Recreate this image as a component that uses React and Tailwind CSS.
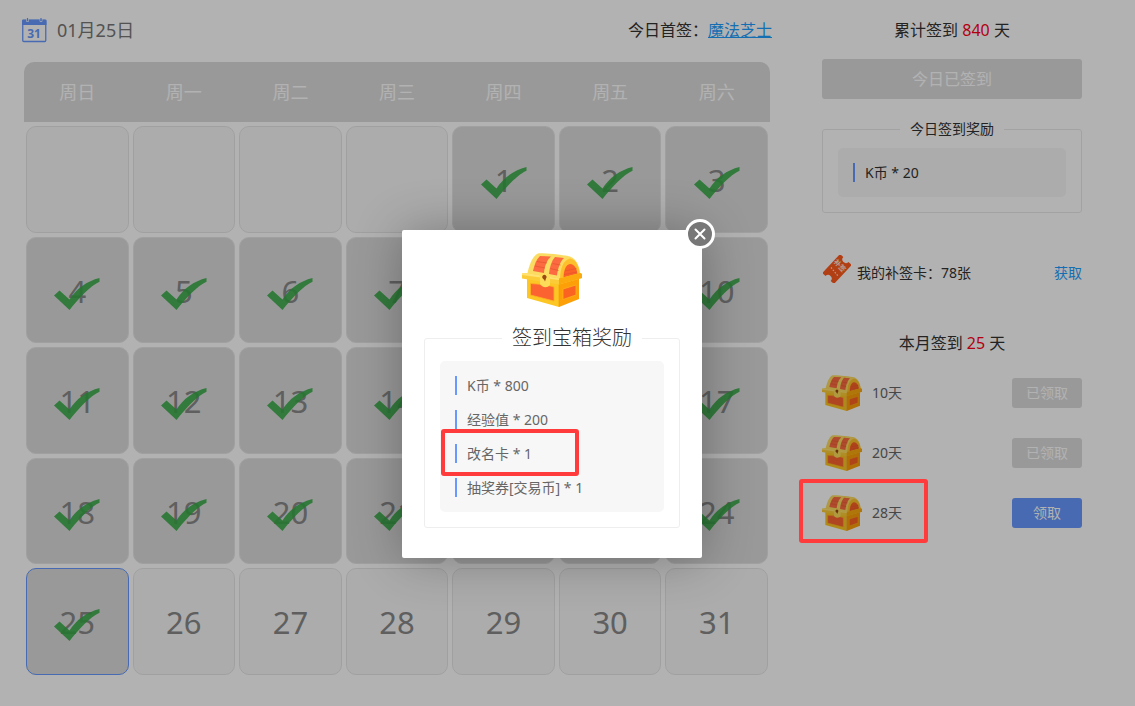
import React from "react";

const weekdays = ["周日", "周一", "周二", "周三", "周四", "周五", "周六"];
const today = 25;
const days = [null, null, null, null, ...Array.from({ length: 31 }, (_, i) => i + 1)];
const chests = [
  { days: 10, claimed: true },
  { days: 20, claimed: true },
  { days: 28, claimed: false, marked: true },
];
const rewards = [
  { text: "K币 * 800" },
  { text: "经验值 * 200" },
  { text: "改名卡 * 1", marked: true },
  { text: "抽奖券[交易币] * 1" },
];

function Chest({ className }) {
  return (
    <svg viewBox="0 0 60 54" className={className} aria-hidden="true">
      <path d="M5 24L37 29V54L5 45Z" fill="#fcc624" />
      <path d="M37 29L57 23V46L37 54Z" fill="#fd9f07" />
      <path d="M5 22C7 13 10 3 16 .5C19 -.3 43 2 48 3.500C55 6 58 15 58.500 23L37 29Z" fill="#fbdc62" />
      <path d="M38 27C38 16 41 7 48 5.500C55 6.500 57.500 15 58 23L38 29Z" fill="#fdc02c" />
      <path d="M18 3L29 3.500C25 7 22.500 13 22 20L11 18C12.500 11 14.500 6 18 3Z" fill="#fb6a40" />
      <path d="M33 4L42 5C38 9 36 15 35 22.500L27 21C27.500 14 29.500 8 33 4Z" fill="#fb6a40" />
      <path d="M41.500 25C41.500 17 44 11.500 48 11C53 11.500 55 16 55.500 22Z" fill="#fb6228" />
      <path d="M15 8.500L25 10M13 13L23 15M30.500 10.500L38.500 12M28.500 15.500L36.500 17.500M43 18L54.500 15.500M42 21.500L55 19" stroke="#e4532f" strokeWidth=".7" />
      <path d="M0 20.500L5 20L37 25.500L58 20L60 21V25L37 31.500L0 25.500Z" fill="#fccc38" />
      <path d="M37 25.500L58 20L60 21V25L37 31.500Z" fill="#fba90d" />
      <path d="M0 20.500L5 20L37 25.500V27L0 22Z" fill="#ffe272" />
      <path d="M8.500 30.500C17 31 26 32 32 34V48L8.500 42Z" fill="#fb6430" stroke="#fdb022" strokeWidth=".8" />
      <path d="M41 36L54 32V42L41 46.500Z" fill="#fb6420" stroke="#fdb020" strokeWidth=".8" />
      <path d="M18 20L28 21.500V32C25 35.500 20 34.500 18 31Z" fill="#fddc5a" />
      <path d="M22.300 27L20.800 25.500A2.200 2.200 0 1 1 24 25.500L23 28.500Z" fill="#9a4a14" />
      <path d="M37 31.500V54" stroke="#f59a06" strokeWidth=".6" />
    </svg>
  );
}

function CalendarIcon() {
  return (
    <svg viewBox="0 0 25 25" className="size-[25px]" aria-hidden="true">
      <rect x=".75" y="2.500" width="23" height="21" rx="1" fill="none" stroke="#6799ff" strokeWidth="1.300" />
      <path d="M0 2.500Q0 1.500 1 1.500H23.500Q24.500 1.500 24.500 2.500V7H0Z" fill="#6799ff" />
      <path d="M4.500 0V3.500H6.500V0M18 0V3.500H20V0" fill="none" stroke="#ffffff" strokeWidth=".7" />
      <path d="M5.500 0V3M19 0V3" stroke="#6799ff" strokeWidth="1.200" />
      <text x="12" y="20" textAnchor="middle" fontSize="12" fontWeight="700" fill="#6799ff">31</text>
    </svg>
  );
}

function Ticket() {
  return (
    <svg viewBox="0 0 28 28" className="size-7 -translate-y-1" aria-hidden="true">
      <g transform="rotate(-47 14 14)">
        <path d="M2 6H26Q27 6 27 7V10.500A3.500 3.500 0 0 0 27 17.500V21Q27 22 26 22H2Q1 22 1 21V17.500A3.500 3.500 0 0 0 1 10.500V7Q1 6 2 6Z" fill="#ff5a1e" />
      </g>
      <path d="M8 12.500L15 21" stroke="#ffe0d0" strokeWidth="1.200" strokeDasharray="1.500 1.500" />
      <text x="16.500" y="13" textAnchor="middle" fontSize="7" fontWeight="700" fill="#ffe8dd" transform="rotate(48 16.500 11)">补签</text>
    </svg>
  );
}

function Check() {
  return (
    <svg viewBox="0 0 46 32" className="absolute top-1/2 left-1/2 h-8 w-[46px] -translate-x-1/2 -translate-y-[12px]" aria-hidden="true">
      <path d="M0 17.500L5.500 12.500L15.500 21.500C22 11 33 3 45.500 0V3.700C36 8 25 20 15.500 32Z" fill="#35a846" fillOpacity=".88" />
    </svg>
  );
}

function Mark({ className }) {
  return <span className={`pointer-events-none absolute z-50 rounded-[3px] border-4 border-[#ff3b3b] ${className}`} />;
}

function Reward({ children }) {
  return <li className="relative border-l-2 border-[#6799ff] pl-2.5 text-sm leading-[19px]">{children}</li>;
}

export default function App() {
  return (
    <div className="relative min-h-screen bg-white font-['Noto_Sans','Noto_Sans_CJK_SC',sans-serif] text-[#333]">
      <div className="flex gap-[52px] pr-[53px] pb-7 pl-6">
        <main className="min-w-0 flex-1">
          <header className="-mx-0.5 flex h-[62px] items-center justify-between pb-0.5">
            <div className="flex items-center gap-2.5 text-lg text-[#777]">
              <CalendarIcon />
              <span>01月25日</span>
            </div>
            <p className="text-base">
              今日首签：<a href="#user" className="text-[#1e9fff] underline">魔法芝士</a>
            </p>
          </header>
          <div className="grid h-[60px] grid-cols-7 items-center rounded-t-[10px] bg-[#dcdcdc] text-center text-lg text-white">
            {weekdays.map((d) => <span key={d}>{d}</span>)}
          </div>
          <div className="grid grid-cols-7 gap-1 px-0.5 py-1">
            {days.map((d, i) => {
              const signed = d !== null && d <= today;
              return (
                <div
                  key={i}
                  className={`relative flex aspect-[26/27] items-center justify-center rounded-[10px] border pt-0.5 text-[31px] text-[#888] ${signed ? "bg-[#dcdcdc]" : "bg-[#f7f7f7]"} ${d === today ? "border-[#6799ff]" : "border-[#e6e6e6]"}`}
                >
                  {d}
                  {signed && <Check />}
                </div>
              );
            })}
          </div>
        </main>

        <aside className="w-[260px] shrink-0">
          <p className="flex h-[59px] items-center justify-center text-base">
            <span>累计签到 <span className="text-[#ff0019]">840</span> 天</span>
          </p>
          <button type="button" disabled className="h-10 w-full rounded-[3px] bg-[#dcdcdc] text-base text-white">今日已签到</button>
          <fieldset className="mt-5 rounded-[3px] border border-[#e9e9e9] px-[15px] pt-[9px] pb-[15px]">
            <legend className="mx-auto px-2.5 text-sm leading-5">今日签到奖励</legend>
            <ul className="rounded-[5px] bg-[#f7f7f7] p-[15px]">
              <Reward>K币 * 20</Reward>
            </ul>
          </fieldset>
          <div className="mt-10 flex h-10 items-center justify-between text-sm">
            <span className="flex items-center gap-1.5 pl-px"><Ticket />我的补签卡：78张</span>
            <a href="#card" className="text-[#1e9fff]">获取</a>
          </div>
          <p className="mt-10 text-center text-base leading-5">本月签到 <span className="text-[#ff0019]">25</span> 天</p>
          <ul className="mt-5 flex flex-col gap-5">
            {chests.map((c) => (
              <li key={c.days} className="relative flex h-10 items-center gap-2.5 text-sm text-[#666]">
                <Chest className="h-9 w-10" />
                <span className="flex-1">{c.days}天</span>
                <button type="button" disabled={c.claimed} className={`h-[30px] w-[70px] rounded-[3px] text-sm text-white ${c.claimed ? "bg-[#dcdcdc]" : "bg-[#6799ff]"}`}>
                  {c.claimed ? "已领取" : "领取"}
                </button>
                {c.marked && <Mark className="-top-3.5 -left-[23px] h-16 w-[129px]" />}
              </li>
            ))}
          </ul>
        </aside>
      </div>

      <div className="absolute inset-0 z-10 flex items-start justify-center bg-black/30 pt-[230px] pr-[31px]">
        <section role="dialog" aria-label="签到宝箱奖励" className="relative w-[300px] rounded-[2px] bg-white px-[22px] pt-[23px] pb-[30px] shadow-[1px_1px_50px_rgba(0,0,0,0.3)]">
          <button type="button" aria-label="关闭" className="absolute -top-[11px] -right-[13px] flex size-[30px] items-center justify-center rounded-full border-3 border-white bg-[#777]">
            <svg viewBox="0 0 12 12" className="size-3" aria-hidden="true">
              <path d="M1.500 1.500L10.500 10.500M10.500 1.500L1.500 10.500" stroke="#fff" strokeWidth="2" strokeLinecap="round" />
            </svg>
          </button>
          <Chest className="mx-auto h-[54px] w-[60px]" />
          <fieldset className="mt-[18px] rounded-[3px] border border-[#eee] px-[15px] pt-2.5 pb-[15px]">
            <legend className="ml-[62px] px-2.5 text-xl leading-[26px] font-light">签到宝箱奖励</legend>
            <ul className="flex flex-col gap-[15px] rounded-[5px] bg-[#f7f7f7] p-[15px] text-[#666]">
              {rewards.map((r) => (
                <Reward key={r.text}>
                  {r.text}
                  {r.marked && <Mark className="-top-[15px] -left-4 h-[47px] w-[138px]" />}
                </Reward>
              ))}
            </ul>
          </fieldset>
        </section>
      </div>
    </div>
  );
}
